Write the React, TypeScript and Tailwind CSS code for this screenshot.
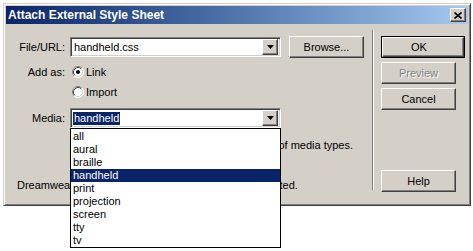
import React from "react"

const raised =
  "bg-[#d4d0c8] border border-t-white border-l-white border-r-[#404040] border-b-[#404040] shadow-[inset_-1px_-1px_0_#808080,inset_1px_1px_0_#d4d0c8]"
const sunken =
  "bg-white border border-t-[#808080] border-l-[#808080] border-r-white border-b-white shadow-[inset_1px_1px_0_#404040,inset_-1px_-1px_0_#d4d0c8]"

const mediaTypes = ["all", "aural", "braille", "handheld", "print", "projection", "screen", "tty", "tv"]

function ArrowButton() {
  return (
    <div className={`${raised} w-4 h-4 flex items-center justify-center shrink-0`}>
      <svg width="7" height="4" viewBox="0 0 7 4">
        <polygon points="0,0 7,0 3.5,4" fill="#000" />
      </svg>
    </div>
  )
}

function Radio({ checked }: { checked?: boolean }) {
  return (
    <svg width="12" height="12" viewBox="0 0 12 12" className="shrink-0">
      <circle cx="6" cy="6" r="5.5" fill="#fff" />
      <path d="M2.11 9.89 A5.5 5.5 0 0 1 9.89 2.11" fill="none" stroke="#808080" />
      <path d="M9.89 2.11 A5.5 5.5 0 0 1 2.11 9.89" fill="none" stroke="#fff" />
      <path d="M2.82 9.18 A4.5 4.5 0 0 1 9.18 2.82" fill="none" stroke="#404040" />
      <path d="M9.18 2.82 A4.5 4.5 0 0 1 2.82 9.18" fill="none" stroke="#d4d0c8" />
      {checked && <circle cx="6" cy="6" r="2" fill="#000" />}
    </svg>
  )
}

function Button({ label, disabled }: { label: string; disabled?: boolean }) {
  return (
    <div className={`${raised} h-[22px] w-[75px] flex items-center justify-center`}>
      <span className={disabled ? "text-[#808080] [text-shadow:1px_1px_0_#fff]" : "text-black"}>{label}</span>
    </div>
  )
}

export default function App() {
  return (
    <div className="w-[473px] h-[251px] bg-white font-['Liberation_Sans',Arial,sans-serif] text-[11px] text-black pt-[3px] pl-[3px]">
      <div className="relative w-[468px] h-[203px] bg-[#d4d0c8] border border-t-[#d4d0c8] border-l-[#d4d0c8] border-r-[#404040] border-b-[#404040] shadow-[inset_1px_1px_0_#fff,inset_-1px_-1px_0_#808080] p-[2px] flex flex-col">
        {/* title bar */}
        <div className="h-[18px] flex items-center justify-between bg-linear-to-r from-[#0a246a] to-[#a6caf0] pl-[2px] pr-[2px]">
          <span className="text-white font-bold text-[12px] leading-none">Attach External Style Sheet</span>
          <div className={`${raised} w-4 h-[14px] flex items-center justify-center`}>
            <svg width="8" height="7" viewBox="0 0 8 7">
              <path d="M0.5 0.5 L7.5 6.5 M7.5 0.5 L0.5 6.5" stroke="#000" strokeWidth="1.6" />
            </svg>
          </div>
        </div>

        <div className="flex flex-1">
          {/* left */}
          <div className="w-[362px] flex flex-col pt-[12px]">
            <div className="flex items-center h-[22px]">
              <span className="w-[59px] text-right">File/URL:</span>
              <div className={`${sunken} ml-[5px] w-[211px] h-[20px] flex items-center justify-between pl-[3px] pr-[2px]`}>
                <span>handheld.css</span>
                <ArrowButton />
              </div>
              <div className={`${raised} ml-[8px] w-[75px] h-[22px] flex items-center justify-center`}>Browse...</div>
            </div>

            <div className="flex items-center h-[16px] mt-[6px]">
              <span className="w-[59px] text-right">Add as:</span>
              <div className="ml-[7px]">
                <Radio checked />
              </div>
              <span className="ml-[2px]">Link</span>
            </div>
            <div className="flex items-center h-[16px] mt-[4px]">
              <span className="w-[59px]" />
              <div className="ml-[7px]">
                <Radio />
              </div>
              <span className="ml-[2px]">Import</span>
            </div>

            <div className="flex items-center h-[20px] mt-[8px]">
              <span className="w-[59px] text-right">Media:</span>
              <div className={`${sunken} relative ml-[5px] w-[211px] h-[20px] flex items-center justify-between pl-[3px] pr-[2px]`}>
                <span className="bg-[#0a246a] text-white leading-[13px] px-[1px] -ml-[1px]">handheld</span>
                <ArrowButton />
                <div className="absolute left-[-1px] top-[19px] z-10 w-[211px] h-[120px] bg-white border border-black pt-[1px] flex flex-col">
                  {mediaTypes.map((m) => (
                    <div
                      key={m}
                      className={`h-[13px] leading-[13px] pl-[2px] ${m === "handheld" ? "bg-[#0a246a] text-white" : ""}`}
                    >
                      {m}
                    </div>
                  ))}
                </div>
              </div>
            </div>

            {/* partly hidden behind the open list */}
            <div className="mt-[11px] h-[13px] leading-[13px] ml-[275px] w-[72px] overflow-hidden whitespace-nowrap flex justify-end">
              <span>You may also enter a comma-separated list of media types.</span>
            </div>

            <div className="mt-[27px] h-[13px] leading-[13px] pl-[11px] whitespace-nowrap">
              Dreamweaver's Sample Style Sheets can get you started.
            </div>
          </div>

          {/* separator */}
          <div className="ml-[4px] mt-[6px] h-[160px] w-[2px] border-l border-l-[#808080] border-r border-r-white" />

          {/* right */}
          <div className="ml-[7px] flex flex-col pt-[12px]">
            <div className="flex h-[22px] w-[84px] border border-black">
              <div className={`${raised} flex-1 flex items-center justify-center pr-[8px]`}>OK</div>
            </div>
            <div className="mt-[4px]">
              <Button label="Preview" disabled />
            </div>
            <div className="mt-[4px]">
              <Button label="Cancel" />
            </div>
            <div className="mt-[60px]">
              <Button label="Help" />
            </div>
          </div>
        </div>
      </div>
    </div>
  )
}
